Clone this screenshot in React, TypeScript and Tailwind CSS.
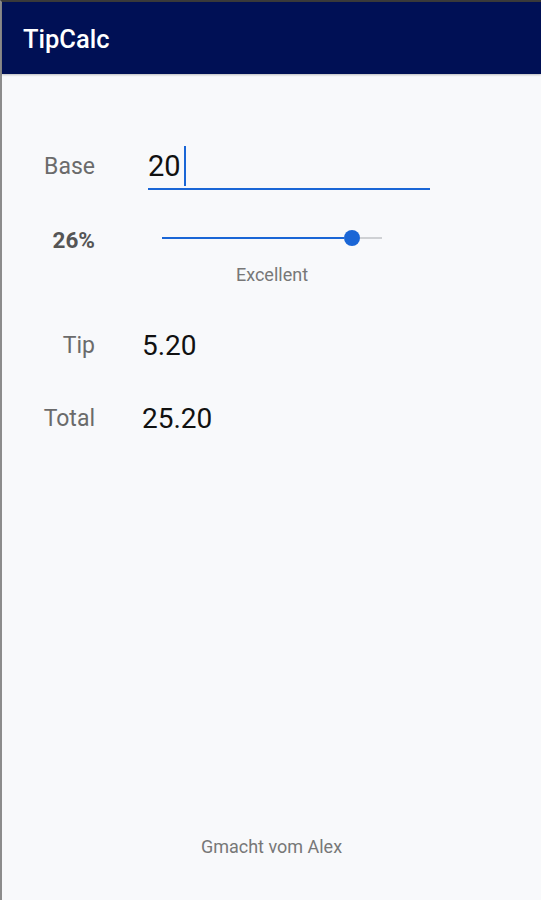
export default function App() {
  return (
    <div
      className="w-[541px] h-[900px] flex flex-col bg-[#f8f9fb] border-t-2 border-l-2 border-t-[#3a3a3a] border-l-[#8c8c8c]"
      style={{ fontFamily: 'Roboto, "Noto Sans", sans-serif' }}
    >
      {/* App bar */}
      <header className="h-[72px] bg-[#001055] flex items-center pl-[21px] shadow-[0_1px_2px_rgba(0,0,0,0.25)]">
        <h1 className="text-white text-[25.5px] font-medium mt-[3px]">TipCalc</h1>
      </header>

      <main className="flex-1 flex flex-col pt-[72px]">
        {/* Base input */}
        <div className="flex items-center h-[44px]">
          <span className="w-[93px] text-right text-[23px] leading-[28px] text-[#6b6b6b] -mt-[3px]">Base</span>
          <div className="ml-[53px] w-[282px] h-[44px] border-b-2 border-[#1a66d6] flex items-start">
            <span className="text-[29px] leading-[40px] text-[#111]">20</span>
            <span className="ml-[3px] w-[2px] h-[40px] bg-[#1a66d6]" />
          </div>
        </div>

        {/* Percent slider */}
        <div className="flex items-center h-[24px] mt-[36px]">
          <span className="w-[93px] text-right text-[22.5px] leading-[26px] font-bold text-[#555] mt-[4px]">26%</span>
          <div className="ml-[67px] w-[220px] flex items-center">
            <div className="w-[182px] h-[2px] bg-[#1a66d6]" />
            <div className="w-4 h-4 rounded-full bg-[#1a66d6]" />
            <div className="flex-1 h-[2px] bg-[#cfd1d4]" />
          </div>
        </div>
        <div className="flex h-[20px] mt-[15px]">
          <div className="ml-[160px] w-[220px] text-center text-[18px] leading-[20px] text-[#777]">Excellent</div>
        </div>

        {/* Tip */}
        <div className="flex items-center h-[32px] mt-[45px]">
          <span className="w-[93px] text-right text-[23px] text-[#6b6b6b]">Tip</span>
          <span className="ml-[47px] text-[28px] text-[#111]">5.20</span>
        </div>

        {/* Total */}
        <div className="flex items-center h-[32px] mt-[41px]">
          <span className="w-[93px] text-right text-[23px] text-[#6b6b6b]">Total</span>
          <span className="ml-[47px] text-[28px] text-[#111]">25.20</span>
        </div>

        <div className="flex-1" />

        <footer className="h-[20px] mb-[43px] text-center text-[18px] leading-[20px] text-[#777]">Gmacht vom Alex</footer>
      </main>
    </div>
  );
}
